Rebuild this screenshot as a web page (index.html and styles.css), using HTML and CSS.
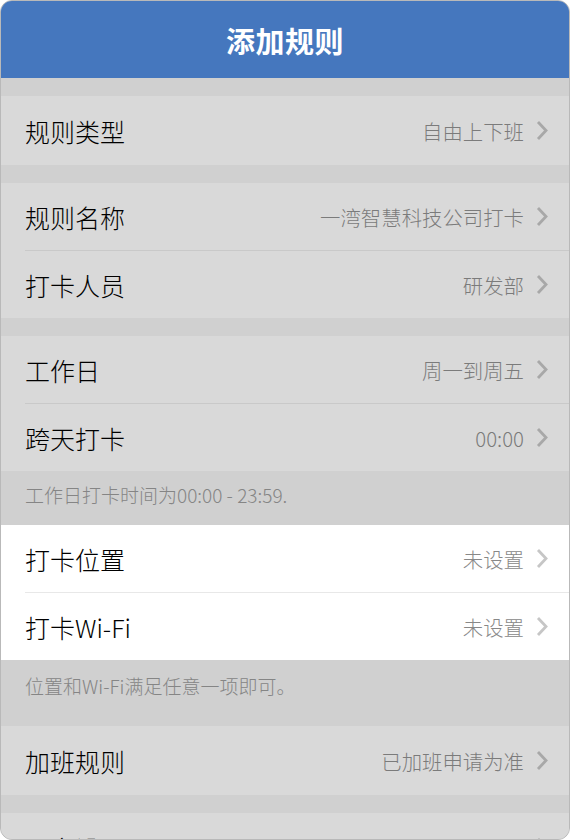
FILE: index.html
```html
<!DOCTYPE html>
<html lang="zh-CN">
<head>
  <meta charset="UTF-8">
  <meta name="viewport" content="width=device-width, initial-scale=1.0">
  <title>添加规则</title>
  <link rel="stylesheet" href="styles.css">
</head>
<body>

  <div class="screen">
    <div class="nav-bar">
      <h1>添加规则</h1>
    </div>

    <div class="content">
      <div class="group single">
        <div class="cell">
          <span class="cell-label">规则类型</span>
          <span class="cell-value">自由上下班</span>
          <svg class="arrow" viewBox="0 0 12 21"><polyline points="2,2 10,10.5 2,19"/></svg>
        </div>
      </div>

      <div class="group">
        <div class="cell">
          <span class="cell-label">规则名称</span>
          <span class="cell-value">一湾智慧科技公司打卡</span>
          <svg class="arrow" viewBox="0 0 12 21"><polyline points="2,2 10,10.5 2,19"/></svg>
        </div>
        <div class="cell">
          <span class="cell-label">打卡人员</span>
          <span class="cell-value">研发部</span>
          <svg class="arrow" viewBox="0 0 12 21"><polyline points="2,2 10,10.5 2,19"/></svg>
        </div>
      </div>

      <div class="group">
        <div class="cell">
          <span class="cell-label">工作日</span>
          <span class="cell-value">周一到周五</span>
          <svg class="arrow" viewBox="0 0 12 21"><polyline points="2,2 10,10.5 2,19"/></svg>
        </div>
        <div class="cell">
          <span class="cell-label">跨天打卡</span>
          <span class="cell-value">00:00</span>
          <svg class="arrow" viewBox="0 0 12 21"><polyline points="2,2 10,10.5 2,19"/></svg>
        </div>
      </div>
      <p class="group-tip">工作日打卡时间为00:00 - 23:59.</p>

      <div class="group active">
        <div class="cell">
          <span class="cell-label">打卡位置</span>
          <span class="cell-value">未设置</span>
          <svg class="arrow" viewBox="0 0 12 21"><polyline points="2,2 10,10.5 2,19"/></svg>
        </div>
        <div class="cell">
          <span class="cell-label">打卡Wi-Fi</span>
          <span class="cell-value">未设置</span>
          <svg class="arrow" viewBox="0 0 12 21"><polyline points="2,2 10,10.5 2,19"/></svg>
        </div>
      </div>
      <p class="group-tip tip-tall">位置和Wi-Fi满足任意一项即可。</p>

      <div class="group single">
        <div class="cell">
          <span class="cell-label">加班规则</span>
          <span class="cell-value">已加班申请为准</span>
          <svg class="arrow" viewBox="0 0 12 21"><polyline points="2,2 10,10.5 2,19"/></svg>
        </div>
      </div>

      <div class="group single">
        <div class="cell">
          <span class="cell-label">更多设置</span>
          <span class="cell-value"></span>
          <svg class="arrow" viewBox="0 0 12 21"><polyline points="2,2 10,10.5 2,19"/></svg>
        </div>
      </div>
    </div>
  </div>

</body>
</html>
```

FILE: styles.css
```css
body {
  margin: 0;
  font-family: "Noto Sans CJK SC", "Noto Sans", sans-serif;
  background-color: #ffffff;
}

.screen {
  width: 570px;
  height: 840px;
  box-sizing: border-box;
  border: 1px solid #b9b9b9;
  border-radius: 12px;
  overflow: hidden;
  background-color: #d0d0d0;
}

.nav-bar {
  height: 77px;
  background-color: #4577be;
  display: flex;
  align-items: center;
  justify-content: center;
}

.nav-bar h1 {
  margin: 0;
  color: #ffffff;
  font-size: 29px;
  font-weight: bold;
  letter-spacing: 0.5px;
}

.content {
  padding-top: 18px;
}

.group {
  background-color: #d9d9d9;
  margin-bottom: 18px;
}

.cell {
  height: 67px;
  display: flex;
  align-items: center;
  margin-left: 24px;
  padding-right: 21px;
  border-bottom: 1px solid #c9c9c9;
}

.cell:last-child {
  border-bottom: none;
}

.group.single .cell {
  height: 69px;
}

.cell-label {
  flex: 1;
  font-size: 25px;
  font-weight: 300;
  color: #000000;
}

.cell-value {
  font-size: 20.4px;
  font-weight: 300;
  color: #7b7b7b;
  margin-right: 12px;
}

.arrow {
  width: 12px;
  height: 21px;
  fill: none;
  stroke: #a8a8a8;
  stroke-width: 2.8;
}

.group-tip {
  margin: -18px 0 0;
  height: 54px;
  padding: 10px 24px 0;
  box-sizing: border-box;
  font-size: 19px;
  font-weight: 300;
  color: #858585;
}

.group-tip.tip-tall {
  height: 66px;
  padding-top: 12px;
}

.group.active {
  background-color: #ffffff;
}

.group.active .cell {
  border-bottom-color: #e8e8e8;
}

.group.active .cell-value {
  color: #888888;
}

.group.active .arrow {
  stroke: #c6c6c6;
}
```
